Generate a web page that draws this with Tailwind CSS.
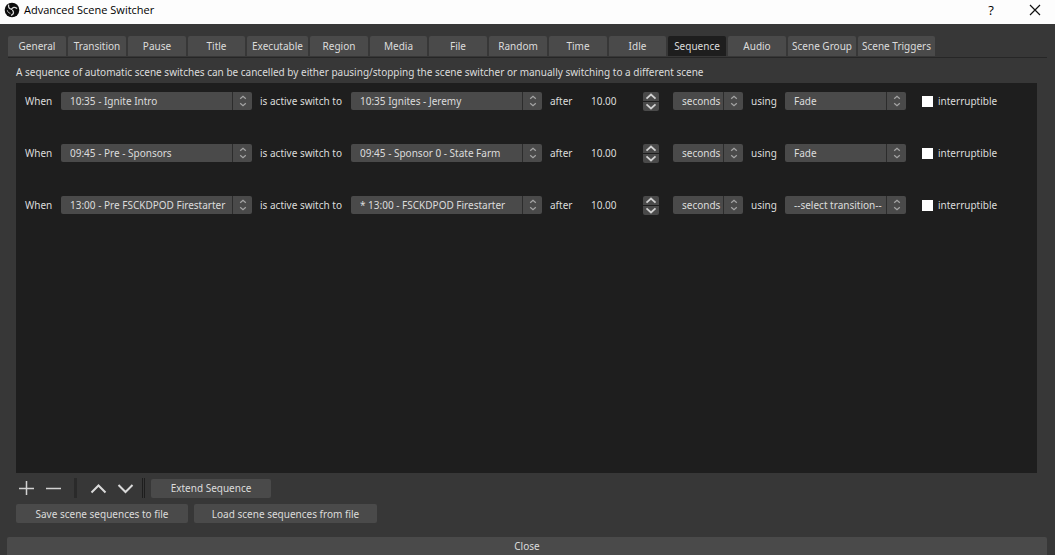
<!DOCTYPE html>
<html lang="en">
<head>
<meta charset="utf-8">
<title>Advanced Scene Switcher</title>
<script src="https://cdn.jsdelivr.net/npm/@tailwindcss/browser@4"></script>
</head>
<body class="flex h-screen flex-col overflow-hidden bg-[#373737] font-['Noto_Sans','Open_Sans',sans-serif] text-[10px] leading-4 text-[#dcdcdc]">
<svg class="hidden" aria-hidden="true">
  <symbol id="updown" viewBox="0 0 8 12"><path d="M1.200 3.800 4 1.200l2.800 2.600M1.200 8.200 4 10.800l2.800-2.600" fill="none" stroke="#a4a4a4" stroke-width="1.200"/></symbol>
  <symbol id="up" viewBox="0 0 16 9"><path d="M3.500 6.700 8 2.500l4.500 4.200" fill="none" stroke="#d0d0d0" stroke-width="1.800"/></symbol>
  <symbol id="down" viewBox="0 0 16 9"><path d="M3.500 2.300 8 6.500l4.500-4.200" fill="none" stroke="#d0d0d0" stroke-width="1.800"/></symbol>
</svg>

<header class="flex h-6 shrink-0 items-center bg-[#fdfdfd] pl-1 pr-[10px] text-black">
  <svg class="mb-1 size-4" viewBox="0 0 16 16" aria-hidden="true">
    <circle cx="8" cy="8" r="7.300" fill="#0c0c0c"/>
    <g fill="none" stroke="#d8d8d8" stroke-width="1.300" stroke-linecap="round">
      <path d="M4.600 3.200c-.4 2.200.7 3.700 2.800 4"/>
      <path d="M12.700 6.200c-2-1.400-4-.9-5 .9"/>
      <path d="M7.500 13.200c2-.9 2.600-2.700 1.300-4.600"/>
      <path d="M7.400 7.300l1.400 1.300M3.400 8.700c.4 1.500 1.300 2.300 2.600 2.500" stroke-width=".9"/>
    </g>
  </svg>
  <h1 class="mb-1 ml-1 font-['Open_Sans','Noto_Sans',sans-serif] text-[11px]">Advanced Scene Switcher</h1>
  <button class="mb-1 ml-auto w-5 font-['Open_Sans',sans-serif] text-[13px] font-medium" aria-label="Help">?</button>
  <button class="mb-1 ml-6 p-1" aria-label="Close window">
    <svg class="size-3" viewBox="0 0 12 12"><path d="M1 1l10 10M11 1 1 11" stroke="#111" stroke-width="1.200"/></svg>
  </button>
</header>

<nav role="tablist" class="mx-2 mt-3 flex shrink-0 gap-0.5 border-b border-[#262626] pb-px">
  <button role="tab" class="h-5 w-[58px] rounded-t-xs bg-[#4a4a4a]">General</button>
  <button role="tab" class="h-5 w-[58px] rounded-t-xs bg-[#4a4a4a]">Transition</button>
  <button role="tab" class="h-5 w-[58px] rounded-t-xs bg-[#4a4a4a]">Pause</button>
  <button role="tab" class="h-5 w-[57px] rounded-t-xs bg-[#4a4a4a]">Title</button>
  <button role="tab" class="h-5 w-[61px] rounded-t-xs bg-[#4a4a4a]">Executable</button>
  <button role="tab" class="h-5 w-[58px] rounded-t-xs bg-[#4a4a4a]">Region</button>
  <button role="tab" class="h-5 w-[57px] rounded-t-xs bg-[#4a4a4a]">Media</button>
  <button role="tab" class="h-5 w-[58px] rounded-t-xs bg-[#4a4a4a]">File</button>
  <button role="tab" class="h-5 w-[58px] rounded-t-xs bg-[#4a4a4a]">Random</button>
  <button role="tab" class="h-5 w-[58px] rounded-t-xs bg-[#4a4a4a]">Time</button>
  <button role="tab" class="h-5 w-[57px] rounded-t-xs bg-[#4a4a4a]">Idle</button>
  <button role="tab" aria-selected="true" class="h-5 w-[58px] rounded-t-xs bg-[#1e1e1e]">Sequence</button>
  <button role="tab" class="h-5 w-[58px] rounded-t-xs bg-[#4a4a4a]">Audio</button>
  <button role="tab" class="h-5 w-[68px] whitespace-nowrap rounded-t-xs bg-[#4a4a4a]">Scene Group</button>
  <button role="tab" class="h-5 w-[77px] whitespace-nowrap rounded-t-xs bg-[#4a4a4a]">Scene Triggers</button>
</nav>

<main class="mx-4 flex min-h-0 flex-1 flex-col">
  <p class="mb-[3px] mt-1.5 whitespace-nowrap">A sequence of automatic scene switches can be cancelled by either pausing/stopping the scene switcher or manually switching to a different scene</p>
  <ul id="rows" class="mr-0.5 flex min-h-0 flex-1 flex-col gap-[34px] overflow-hidden bg-[#1e1e1e] py-[9px] pl-[9px]"></ul>

  <div class="mt-[5px] flex h-5 shrink-0 items-center">
    <button class="ml-px p-px" aria-label="Add"><svg class="size-4" viewBox="0 0 16 16"><path d="M8.500 1v14M1 8.500h15" stroke="#d2d2d2" stroke-width="1.500"/></svg></button>
    <button class="ml-2.5 p-px" aria-label="Remove"><svg class="size-4" viewBox="0 0 16 16"><path d="M0 8.500h15" stroke="#d2d2d2" stroke-width="1.500"/></svg></button>
    <span class="ml-[11px] h-5 w-[3px] bg-[#2a2a2a]"></span>
    <button class="ml-3 p-px" aria-label="Move up"><svg class="h-4 w-[17px]" viewBox="0 0 17 16"><path d="M1.500 12.500 8.500 5.500l7 7" fill="none" stroke="#dadada" stroke-width="2"/></svg></button>
    <button class="ml-2 p-px" aria-label="Move down"><svg class="h-4 w-[17px]" viewBox="0 0 17 16"><path d="M1.500 5 8.500 12l7-7" fill="none" stroke="#dadada" stroke-width="2"/></svg></button>
    <span class="ml-[7px] h-5 w-[3px] border-x border-[#1e1e1e]"></span>
    <button class="ml-1.5 h-[19px] w-[120px] rounded-xs bg-[#4a4a4a]">Extend Sequence</button>
  </div>
  <div class="mt-1.5 flex shrink-0 gap-1.5">
    <button class="h-[19px] w-[172px] rounded-xs bg-[#4a4a4a]">Save scene sequences to file</button>
    <button class="h-[19px] w-[183px] rounded-xs bg-[#4a4a4a]">Load scene sequences from file</button>
  </div>
</main>

<footer class="ml-[7px] mr-2 mt-3.5 flex shrink-0">
  <button class="h-[18px] w-full rounded-t-xs bg-[#4a4a4a]">Close</button>
</footer>

<template id="row">
  <li class="flex h-[18px] shrink-0 items-center whitespace-nowrap">
    <label class="w-9" data-for="from">When</label>
    <span class="relative flex w-[191px]">
      <select data-id="from" class="h-[18px] w-full appearance-none rounded-xs bg-[#4a4a4a] pl-[9px] pr-5"></select>
      <span class="pointer-events-none absolute inset-y-0 right-0 flex w-5 items-center justify-center border-l border-[#2c2c2c]"><svg class="h-3 w-2"><use href="#updown"/></svg></span>
    </span>
    <label class="ml-2 w-[91px]" data-for="to">is active switch to</label>
    <span class="relative flex w-[191px]">
      <select data-id="to" class="h-[18px] w-full appearance-none rounded-xs bg-[#4a4a4a] pl-[9px] pr-5"></select>
      <span class="pointer-events-none absolute inset-y-0 right-0 flex w-5 items-center justify-center border-l border-[#2c2c2c]"><svg class="h-3 w-2"><use href="#updown"/></svg></span>
    </span>
    <label class="ml-2 w-[41px]" data-for="delay">after</label>
    <input data-id="delay" value="10.00" class="w-[52px] bg-transparent">
    <span class="flex w-4 flex-col gap-px">
      <button class="h-[9px] rounded-t-xs bg-[#4a4a4a]" aria-label="Increase"><svg class="h-[9px] w-4"><use href="#up"/></svg></button>
      <button class="h-[9px] rounded-b-xs bg-[#4a4a4a]" aria-label="Decrease"><svg class="h-[9px] w-4"><use href="#down"/></svg></button>
    </span>
    <span class="relative ml-3.5 flex w-[70px]">
      <select aria-label="Unit" class="h-[18px] w-full appearance-none rounded-xs bg-[#4a4a4a] pl-[9px] pr-0"><option>seconds</option></select>
      <span class="pointer-events-none absolute inset-y-0 right-0 flex w-5 items-center justify-center border-l border-[#2c2c2c]"><svg class="h-3 w-2"><use href="#updown"/></svg></span>
    </span>
    <label class="ml-2 w-[34px]" data-for="using">using</label>
    <span class="relative flex w-[121px]">
      <select data-id="using" class="h-[18px] w-full appearance-none rounded-xs bg-[#4a4a4a] pl-[9px] pr-5"></select>
      <span class="pointer-events-none absolute inset-y-0 right-0 flex w-5 items-center justify-center border-l border-[#2c2c2c]"><svg class="h-3 w-2"><use href="#updown"/></svg></span>
    </span>
    <label class="ml-4 flex items-center gap-[5px]"><input type="checkbox" class="size-[11px] appearance-none bg-white checked:bg-sky-500">interruptible</label>
  </li>
</template>
<script>
  const sequences = [
    { from: '10:35 - Ignite Intro', to: '10:35 Ignites - Jeremy', using: 'Fade' },
    { from: '09:45 - Pre - Sponsors', to: '09:45 - Sponsor 0 - State Farm', using: 'Fade' },
    { from: '13:00 - Pre FSCKDPOD Firestarter', to: '* 13:00 - FSCKDPOD Firestarter', using: '--select transition--' },
  ];
  sequences.forEach((sequence, i) => {
    const row = document.getElementById('row').content.cloneNode(true);
    row.querySelectorAll('[data-id]').forEach(el => {
      el.id = el.dataset.id + i;
      if (el.tagName === 'SELECT') el.add(new Option(sequence[el.dataset.id]));
    });
    row.querySelectorAll('[data-for]').forEach(el => { el.htmlFor = el.dataset.for + i; });
    document.getElementById('rows').append(row);
  });
</script>
</body>
</html>
